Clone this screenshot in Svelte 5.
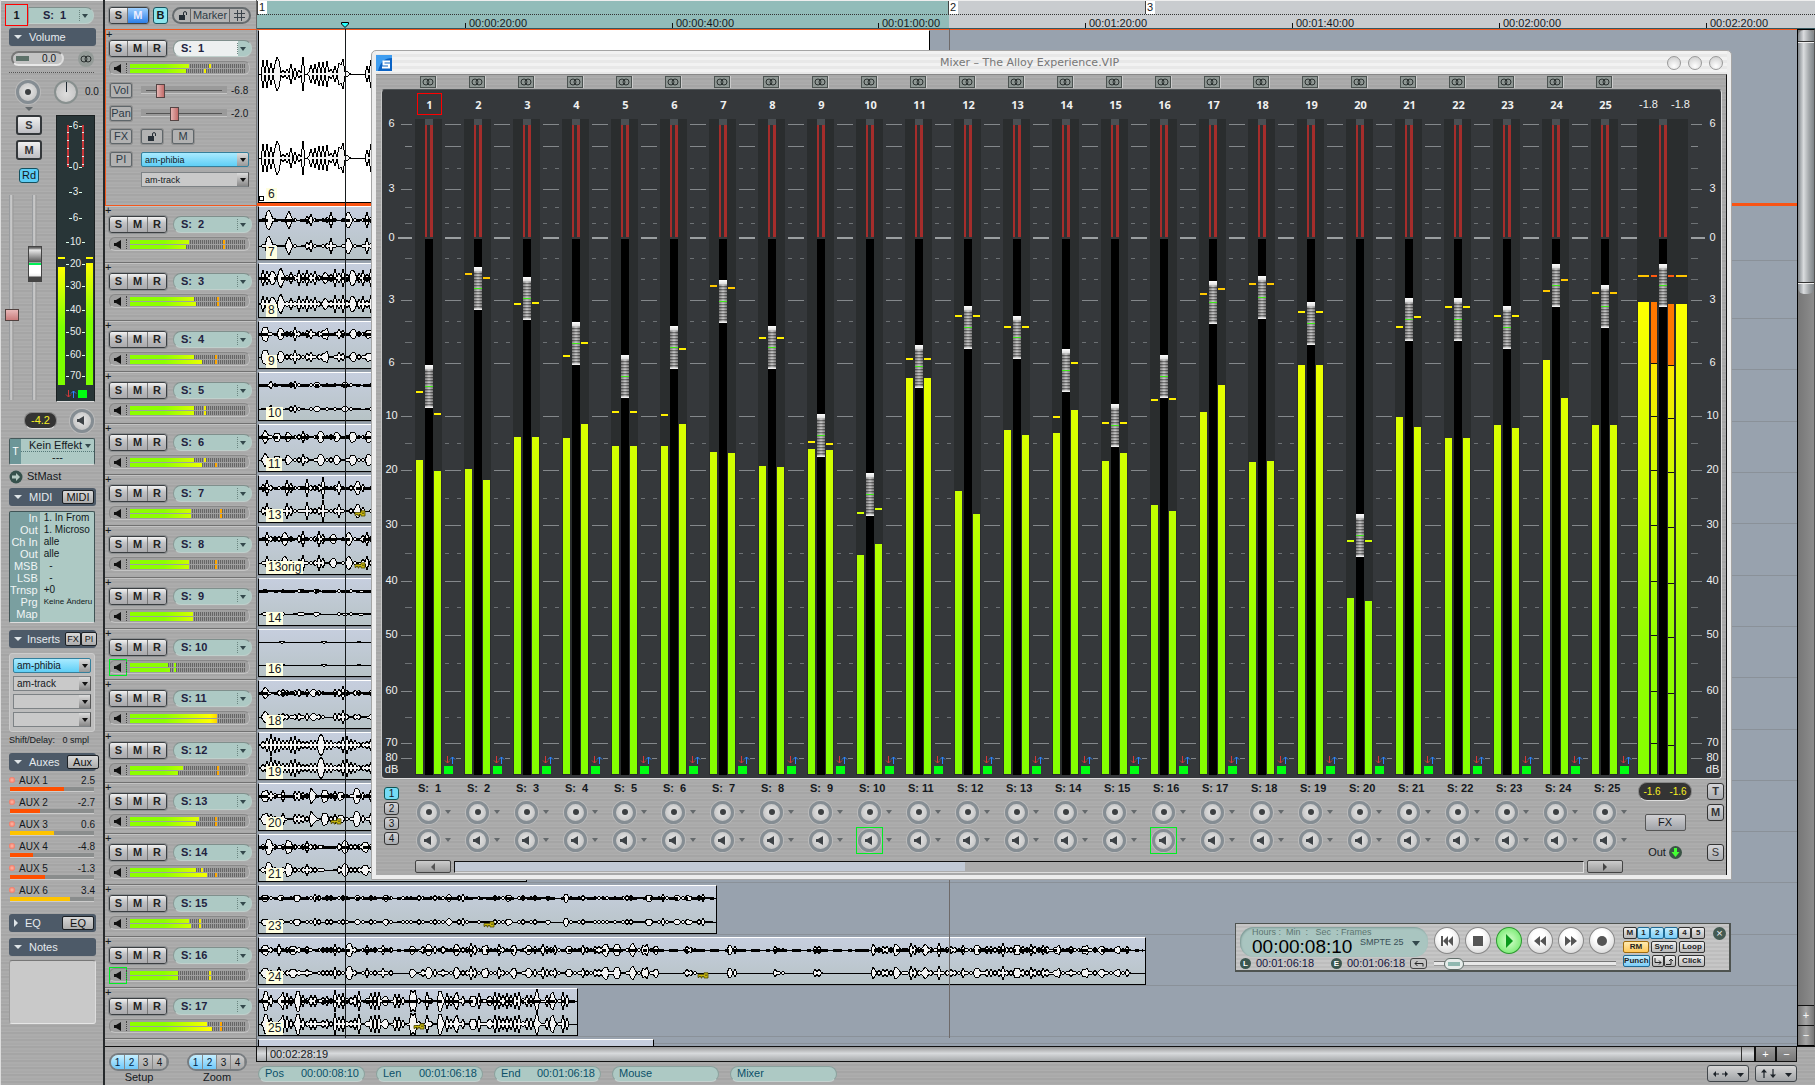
<script>
  const PX_PER_SECOND = 10.34;
  const at = (seconds) => Math.round(seconds * PX_PER_SECOND + 1);

  const ticks = [
    [20, '00:00:20:00'], [40, '00:00:40:00'], [60, '00:01:00:00'], [80, '00:01:20:00'],
    [100, '00:01:40:00'], [120, '00:02:00:00'], [140, '00:02:20:00']
  ];
  const markers = [[0, '1'], [66.8, '2'], [85.9, '3']];

  // Track rows: row height, meter levels and peaks, clip label, clip length and wave shape
  const tracks = [
    { n: 1, h: 177, l: 59, r: 56, pl: 80, pr: 75, clip: '6', w: 672, wave: [20, 34, 12, 0.7], gaps: [[45, 49], [91, 107]] },
    { n: 2, h: 57, l: 59, r: 56, pl: 94, pr: 94, clip: '7', w: 560, wave: [13, 19, 3, 0.08] },
    { n: 3, h: 58, l: 64, r: 66, pl: 88, pr: 88, clip: '8', w: 560, wave: [12, 9, 4, 0.3] },
    { n: 4, h: 51, l: 64, r: 72, pl: 86, pr: 86, clip: '9', w: 560, wave: [9, 12, 4, 0.3] },
    { n: 5, h: 52, l: 64, r: 64, pl: 75, pr: 75, clip: '10', w: 560, wave: [5, 24, 5, 0.35] },
    { n: 6, h: 51, l: 64, r: 72, pl: 75, pr: 86, clip: '11', w: 560, wave: [9, 13, 4, 0.3] },
    { n: 7, h: 51, l: 61, r: 61, pl: 91, pr: 91, clip: '13', w: 560, wave: [12, 17, 3, 0.25], key: 95 },
    { n: 8, h: 52, l: 59, r: 59, pl: 86, pr: 86, clip: '13orig', w: 560, wave: [10, 17, 3, 0.25], key: 95 },
    { n: 9, h: 51, l: 63, r: 63, pl: 0, pr: 0, clip: '14', w: 560, wave: [3, 14, 9, 0.6], gaps: [[26, 32], [62, 78]] },
    { n: 10, h: 51, l: 38, r: 40, pl: 45, pr: 45, clip: '16', w: 560, wave: [3, 46, 1, 0], solo: true },
    { n: 11, h: 52, l: 87, r: 87, pl: 0, pr: 0, clip: '18', w: 560, wave: [8, 14, 4, 0.4], gaps: [[66, 74]] },
    { n: 12, h: 51, l: 53, r: 48, pl: 88, pr: 88, clip: '19', w: 560, wave: [12, 25, 10, 0.2] },
    { n: 13, h: 51, l: 69, r: 66, pl: 86, pr: 86, clip: '20', w: 560, wave: [10, 14, 4, 0.4], key: 71 },
    { n: 14, h: 51, l: 66, r: 77, pl: 72, pr: 86, clip: '21', w: 269, wave: [10, 18, 5, 0.25], gaps: [[66, 74]] },
    { n: 15, h: 52, l: 59, r: 61, pl: 70, pr: 70, clip: '23', w: 459, wave: [5, 14, 4, 0.35], gaps: [[292, 304]], key: 224 },
    { n: 16, h: 51, l: 48, r: 48, pl: 80, pr: 80, clip: '24', w: 888, wave: [8, 13, 5, 0.35], gaps: [[134, 150], [400, 424], [438, 468], [478, 514], [526, 555], [564, 612], [872, 890]], key: 438 },
    { n: 17, h: 51, l: 77, r: 82, pl: 91, pr: 91, clip: '25', w: 320, wave: [15, 14, 3, 0.6], gaps: [[310, 321]], key: 154 }
  ];

  function random(seed) {
    let s = seed * 7919 + 17;
    return () => ((s = (s * 16807) % 2147483647) / 2147483647);
  }

  function wavePath(track, centre) {
    const [amp, period, decay, base] = track.wave;
    const rnd = random(track.n);
    const width = track.w - 3;
    const up = [];
    const down = [];
    let phase = 0;
    let next = period;
    let power = 1;
    for (let x = 2, i = 0; x < width; x += 2, i += 1) {
      phase += 2;
      if (phase > next) {
        phase = 0;
        next = period * (0.7 + rnd() * 0.6);
        power = 0.6 + rnd() * 0.4;
      }
      const silent = (track.gaps ?? []).some(([a, b]) => x >= a && x <= b);
      const distance = Math.abs(phase - next / 2);
      const jitter = Math.pow(rnd(), 1.5);
      const valley = i % 2 === 0 && distance > 1;
      const env = (base * jitter + (1 - base) * power * Math.exp(-distance / decay)) * (valley ? 0.15 : 1);
      const a = silent ? 0 : amp * env;
      up.push(`${x} ${Math.round(centre - a)}`);
      down.unshift(`${x} ${Math.round(centre + a)}`);
    }
    return `M0 ${centre}L${up.join('L')}L${width + 2} ${centre}L${down.join('L')}Z`;
  }

  const laneWaves = tracks.map((t) => {
    const h = t.n === 1 ? 172 : t.h - 4;
    const c = Math.round(h * 0.25);
    return { h, c, top: wavePath(t, c), bottom: wavePath(t, Math.round(h * 0.74)) };
  });

  // Mixer scale, in pixels below the top of the meters
  const scale = [
    [5, '6'], [70, '3'], [119, '0'], [181, '3'], [244, '6'], [297, '10'], [351, '20'],
    [406, '30'], [462, '40'], [516, '50'], [572, '60'], [624, '70'], [639, '80'], [651, 'dB']
  ];
  const fullTicks = [5, 27, 70, 181, 244, 297, 351, 406, 462, 516, 572, 624, 639];
  const halfTicks = [49, 88, 104, 139, 160, 202, 223, 324, 379, 434, 488, 544, 598];
  const METER = 656;
  const THUMB = 43;

  // left level, right level, fader top, left peak, right peak
  const channels = [
    [341, 352, 246, 273, 295], [350, 361, 148, 155, 159], [318, 318, 158, 185, 184],
    [319, 305, 203, 237, 224], [327, 327, 236, 293, 293], [327, 305, 207, 296, 230],
    [333, 334, 161, 167, 169], [347, 348, 207, 219, 219], [330, 331, 295, 323, 325],
    [436, 425, 354, 394, 390], [259, 259, 226, 240, 240], [372, 395, 187, 197, 197],
    [311, 316, 197, 208, 208], [314, 291, 230, 298, 244], [342, 334, 285, 304, 304],
    [386, 392, 236, 281, 280], [293, 266, 162, 175, 170], [343, 342, 157, 165, 165],
    [246, 246, 183, 193, 193], [479, 482, 395, 422, 422], [298, 308, 179, 208, 198],
    [319, 319, 179, 188, 188], [306, 309, 187, 197, 197], [241, 279, 145, 172, 161],
    [306, 306, 166, 174, 174]
  ];
  const peakTone = (y) => (y < 176 ? 'amber' : y > 380 ? 'lime' : 'yellow');
  const trackName = (n) => (n < 10 ? `S:\u00a0\u00a0${n}` : `S:\u00a0${n}`);

  const inspectorScale = [
    [10, '6'], [51, '0'], [76, '3'], [102, '6'], [126, '10'], [148, '20'],
    [170, '30'], [194, '40'], [216, '50'], [239, '60'], [260, '70']
  ];
  const midi = [
    ['In', '1. In From'], ['Out', '1. Microso'], ['Ch In', 'alle'], ['Out', 'alle'], ['MSB', '  -'],
    ['LSB', '  -'], ['Trnsp', '+0'], ['Prg', 'Keine Änderu'], ['Map', '']
  ];
  const auxes = [
    ['AUX 1', '2.5', 54, 'red'], ['AUX 2', '-2.7', 30, 'red'], ['AUX 3', '0.6', 44, 'gold'],
    ['AUX 4', '-4.8', 23, 'red'], ['AUX 5', '-1.3', 35, 'red'], ['AUX 6', '3.4', 60, 'gold']
  ];
  const inserts = ['am-phibia', 'am-track', '', ''];
  const status = [['Pos', '00:00:08:10'], ['Len', '00:01:06:18'], ['End', '00:01:06:18'], ['Mouse', ''], ['Mixer', '']];
</script>

{#snippet speaker()}
  <svg class="speaker" width="8" height="9" viewBox="0 0 8 9" aria-hidden="true"><path d="M0 3H2L7 0V9L2 6H0Z" /></svg>
{/snippet}

{#snippet link()}
  <svg width="12" height="8" viewBox="0 0 12 8" fill="none" stroke="#2c3231" aria-hidden="true"><circle cx="4" cy="4" r="3" /><circle cx="8" cy="4" r="3" /></svg>
{/snippet}

{#snippet lock()}
  <svg width="10" height="9" viewBox="0 0 10 9" aria-hidden="true"><path d="M1 4H7V9H1Z" fill="#262e36" /><path d="M5.500 4V2Q5.500 .6 7 .6T8.500 2V4" fill="none" stroke="#262e36" /></svg>
{/snippet}

{#snippet clip(track, wave)}
  <div class="clip" class:selected={track.n === 1} style:width={`${track.w}px`}>
    <svg width={track.w} height={wave.h} aria-hidden="true">
      <path class="wave" d={wave.top} />
      {#if ![1, 10, 12].includes(track.n)}<path class="core" d={`M0 ${wave.c}H${track.w - 4}`} />{/if}
      <path class="wave" d={wave.bottom} />
    </svg>
    {#if track.n === 1}<span class="grip"></span>{/if}
    <span class="clip-name">{track.clip}</span>
    {#if track.key}
      <svg class="key" style:left={`${track.key}px`} width="12" height="7" viewBox="0 0 12 7" aria-hidden="true">
        <path d="M1 2.500H7V.8H11V6H7V4.500H5V6H4V4.500H2V5.500H1Z" fill="#c8b80c" stroke="#4c4600" stroke-width=".8" /><path d="M9 2.500V4" stroke="#222" />
      </svg>
    {/if}
  </div>
{/snippet}

{#snippet arrows()}
  <svg class="arrows" width="12" height="8" viewBox="0 0 12 8" fill="none" aria-hidden="true">
    <path d="M3.500 0V7M1 4.500L3.500 7L6 4.500" stroke="#d2383a" /><path d="M8.500 8V1M6 3.500L8.500 1L11 3.500" stroke="#2c86ff" />
  </svg>
{/snippet}

{#snippet trackMeter(track)}
  <div class="meter-pill">
    <button class="mute" class:framed={track.solo || track.n === 16} aria-label={`Monitor track ${track.n}`}>{@render speaker()}</button>
    <i class="dots"></i>
    <div class="levels">
      {#each [[track.l, track.pl], [track.r, track.pr]] as [level, peak]}
        <div class="level">
          <div class="fill" style:width={`${level}px`}></div>
          {#if peak}<i class="peak" class:green={peak < 60} class:amber={peak > 84} style:left={`${peak - 1}px`}></i>{/if}
        </div>
      {/each}
    </div>
  </div>
{/snippet}

<div class="app">
  <aside class="inspector metal">
    <div class="current">
      <button class="number">1</button>
      <label class="pill-select"><select aria-label="Track"><option>S:&nbsp;&nbsp;1</option></select></label>
    </div>
    <h2 class="bar"><i class="tri"></i>Volume</h2>
    <div class="gain"><span class="gain-pill"><i></i>0.0</span><button class="link-button" aria-label="Link channels">{@render link()}</button></div>
    <div class="knobs">
      <button class="knob" aria-label="Record input"><i></i></button>
      <button class="pan-knob" aria-label="Pan"><i></i></button>
      <span>0.0</span>
    </div>
    <div class="strip">
      <div class="strip-left">
        <i class="tri grey"></i>
        <button class="square">S</button>
        <button class="square">M</button>
        <button class="read">Rd</button>
        <div class="strip-faders">
          <input class="small-fader" type="range" min="0" max="193" value="79" aria-label="Automation" />
          <input class="main-fader" type="range" min="0" max="172" value="120" aria-label="Volume" />
        </div>
      </div>
      <div class="strip-meter">
        <i class="clip-line"></i><i class="clip-line right"></i>
        <i class="vbar" style:height="118px"></i><i class="vbar right" style:height="122px"></i>
        <i class="vpeak"></i><i class="vpeak right"></i>
        {#each inspectorScale as [y, label]}<span style:top={`${y - 6}px`}><i></i>{label}<i></i></span>{/each}
        <div class="strip-status">{@render arrows()}<i class="led"></i></div>
      </div>
    </div>
    <div class="readout"><span class="lcd">-4.2</span><button class="knob" aria-label="Monitor">{@render speaker()}</button></div>
    <div class="effect"><b>T</b><label><select aria-label="Effect"><option>Kein Effekt</option></select><span>---</span></label></div>
    <div class="output"><svg width="14" height="14" viewBox="0 0 14 14" aria-hidden="true"><circle cx="7" cy="7" r="6.500" fill="#36514c" /><path d="M3 5.500H7V3L11 7L7 11V8.500H3Z" fill="#b6cbc4" /></svg>StMast</div>
    <h2 class="bar"><i class="tri"></i>MIDI<button class="chip wide">MIDI</button></h2>
    <table class="midi"><tbody>{#each midi as [name, value]}<tr><th>{name}</th><td class:tiny={value.length > 10}>{value}</td></tr>{/each}</tbody></table>
    <h2 class="bar"><i class="tri"></i>Inserts<span class="pair"><button class="chip">FX</button><button class="chip">PI</button></span></h2>
    <div class="inserts">
      {#each inserts as name, i}<label class="combo" class:on={i === 0}><select aria-label={`Insert ${i + 1}`}><option>{name}</option></select></label>{/each}
    </div>
    <div class="shift"><span>Shift/Delay:</span><span>0 smpl</span></div>
    <h2 class="bar"><i class="tri"></i>Auxes<button class="chip wide">Aux</button></h2>
    <div class="auxes">
      {#each auxes as [name, value, width, tone]}
        <div class="aux"><div><i class="lamp"></i>{name}<span>{value}</span></div><div class="aux-track"><i class={tone} style:width={`${width}px`}></i></div></div>
      {/each}
    </div>
    <h2 class="bar"><i class="tri side"></i>EQ<button class="chip wide">EQ</button></h2>
    <h2 class="bar notes-bar"><i class="tri"></i>Notes</h2>
    <textarea class="notes" aria-label="Notes"></textarea>
  </aside>

  <div class="arranger">
    <header class="top">
      <div class="tools metal">
        <div class="group"><button>S</button><button class="blue">M</button></div>
        <button class="b-button">B</button>
        <div class="marker-tools"><button aria-label="Lock">{@render lock()}</button><button>Marker</button><button aria-label="Grid"><svg width="11" height="11" viewBox="0 0 11 11" stroke="#3a434a" aria-hidden="true"><path d="M3.500 0V11M7.500 0V11M0 3.500H11M0 7.500H11" /></svg></button></div>
      </div>
      <div class="ruler">
        <div class="loop" style:width={`${at(66.8)}px`}></div>
        <div class="flags">{#each markers as [t, label]}<span style:left={`${at(t) - 1}px`}>{label}</span>{/each}</div>
        <div class="times">{#each ticks as [t, label]}<span style:left={`${at(t)}px`}>{label}</span>{/each}</div>
        <svg class="play-flag" style:left={`${at(8.4) - 4}px`} width="8" height="6" viewBox="0 0 8 6" aria-hidden="true"><path d="M.5 .5H7.500V2L4 5.500L.5 2Z" fill="#2ff" stroke="#000" /></svg>
      </div>
    </header>

    <div class="body">
      <div class="rows">
        {#each tracks as track, i}
          <div class="row" class:active={i === 0} style:height={`${track.h}px`}>
            <div class="head metal">
              <span class="plus">+</span>
              <div class="head-line">
                <div class="group"><button>S</button><button>M</button><button>R</button></div>
                <label class="pill-select" class:white={i === 0}><select aria-label="Track name"><option>{trackName(track.n)}</option></select></label>
              </div>
              {@render trackMeter(track)}
              {#if i === 0}
                <div class="control"><button class="tag">Vol</button><input type="range" min="0" max="100" value="20" aria-label="Track volume" /><span>-6.8</span></div>
                <div class="control"><button class="tag">Pan</button><input type="range" min="0" max="100" value="38" aria-label="Track pan" /><span>-2.0</span></div>
                <div class="control"><button class="tag">FX</button><button class="tag" aria-label="Lock">{@render lock()}</button><button class="tag">M</button></div>
                <div class="control plugins"><button class="tag">PI</button>
                  <div>
                    <label class="combo on"><select aria-label="Plug-in 1"><option>am-phibia</option></select></label>
                    <label class="combo"><select aria-label="Plug-in 2"><option>am-track</option></select></label>
                  </div>
                </div>
              {/if}
            </div>
            <div class="lane">{@render clip(track, laneWaves[i])}</div>
          </div>
        {/each}
        <div class="row last"><div class="head metal"></div><div class="lane"><div class="clip stub"></div></div></div>
        <i class="playhead" style:left={`${152 + at(8.4)}px`}></i>
        <i class="playhead end" style:left={`${152 + at(66.8)}px`}></i>
      </div>
      <div class="v-scroll"><div class="v-thumb"><i></i><i></i></div><button>+</button><button>−</button></div>
    </div>

    <footer class="bottom metal">
      <div class="setups">
        {#each ['Setup', 'Zoom'] as name}
          <div><span class="quad"><button class="on">1</button><button class="on">2</button><button>3</button><button>4</button></span>{name}</div>
        {/each}
      </div>
      <div class="foot">
        <div class="h-scroll"><div class="h-thumb"><i></i><span>00:02:28:19</span><i class="end"></i></div><button>+</button><button>−</button></div>
        <div class="status">
          {#each status as [name, value]}<span class="field">{name}<b>{value}</b></span>{/each}
          <div class="zoomers">
            <button aria-label="Horizontal zoom"><svg width="34" height="10" viewBox="0 0 34 10" fill="#1c2228" aria-hidden="true"><path d="M2 5L5 2V4.500H8V5.500H5V8ZM17 5L14 2V4.500H11V5.500H14V8ZM26 4H33L29.500 8Z" /></svg></button>
            <button aria-label="Vertical zoom"><svg width="34" height="10" viewBox="0 0 34 10" fill="#1c2228" aria-hidden="true"><path d="M5 0L8 3.500H5.600V9H4.400V3.500H2ZM14 9L11 5.500H13.400V0H14.600V5.500H17ZM26 4H33L29.500 8Z" /></svg></button>
          </div>
        </div>
      </div>
    </footer>
  </div>

  <section class="mixer" aria-label="Mixer">
    <div class="title">
      <svg width="16" height="16" viewBox="0 0 16 16" aria-hidden="true"><rect width="16" height="16" fill="#0a62c4" /><path d="M0 0H16V3Q5 3 2 16H0Z" fill="#3f9df0" /><path d="M14 6.500H7.500V9.500H13V12.500H6" fill="none" stroke="#fff" stroke-width="2" /></svg>
      <h1>Mixer – The Alloy Experience.VIP</h1>
      <div class="window-buttons"><button aria-label="Minimise"></button><button aria-label="Maximise"></button><button aria-label="Close"></button></div>
    </div>
    <div class="mixer-body metal">
      <div class="links">{#each channels as _, i}<div class="cell"><button aria-label={`Link channel ${i + 1}`}>{@render link()}</button></div>{/each}</div>
      <div class="panel">
        <div class="scale">{#each scale as [y, label]}<span style:top={`${y - 7}px`}>{label}</span>{/each}
          <svg width="33" height="656" aria-hidden="true">{#each fullTicks as y}<path class="tick" d={y === 27 ? `M23 ${y}.5H30` : `M19 ${y}.5H30`} />{/each}{#each halfTicks as y}<path class="tick dim" d={`M23 ${y}.5H30`} />{/each}<path class="tick zero" d="M16 119H30" /></svg>
        </div>
        {#each channels as [l, r, fader, pl, pr], i}
          <div class="channel" class:final={i === 24}>
            <div class="number-row"><span class:picked={i === 0}>{i + 1}</span></div>
            <div class="meter">
              <div class="columns">
                <i class="bar-level" style:height={`${METER - 1 - l}px`}></i>
                <input class="fader" type="range" min="0" max={METER - THUMB} value={METER - THUMB - fader} aria-label={`Fader ${i + 1}`} />
                <i class="bar-level" style:height={`${METER - 1 - r}px`}></i>
                <i class={`mark ${peakTone(pl)}`} style:top={`${pl - 1}px`}></i>
                <i class={`mark right ${peakTone(pr)}`} style:top={`${pr - 1}px`}></i>
              </div>
              <div class="gap">
                <svg width="19" height="656" aria-hidden="true">{#each fullTicks as y}<path class="tick" d={`M3 ${y}.5H19`} />{/each}{#each halfTicks as y}<path class="tick dim" d={`M3 ${y}.5H7M15 ${y}.5H19`} />{/each}<path class="tick zero" d="M3 119H19" /></svg>
                {@render arrows()}<i class="led"></i>
              </div>
            </div>
          </div>
        {/each}
        <div class="master">
          <div class="number-row"><span>-1.8</span><span>-1.8</span></div>
          <div class="meter">
            <i class="wide-bar" style:height="472px"></i><i class="hot-bar" style:height="472px"></i>
            <input class="fader" type="range" min="0" max={METER - THUMB} value={METER - THUMB - 145} aria-label="Master fader" />
            <i class="hot-bar" style:height="470px"></i><i class="wide-bar" style:height="470px"></i>
            <i class="master-peak"></i>
          </div>
        </div>
        <div class="scale right">{#each scale as [y, label]}<span style:top={`${y - 7}px`}>{label}</span>{/each}
          <svg width="33" height="656" aria-hidden="true">{#each fullTicks as y}<path class="tick" d={y === 27 ? `M3 ${y}.5H10` : `M3 ${y}.5H14`} />{/each}{#each halfTicks as y}<path class="tick dim" d={`M3 ${y}.5H10`} />{/each}<path class="tick zero" d="M3 119H17" /></svg>
        </div>
      </div>
      <div class="desk">
        <div class="pages"><button class="on">1</button><button>2</button><button>3</button><button>4</button></div>
        <div class="desk-main">
          <div class="desk-channels">
            {#each channels as _, i}
              <div class="desk-channel" class:final={i === 24}>
                <b>{trackName(i + 1)}</b>
                <div><button class="knob" aria-label={`Record ${i + 1}`}><i></i></button><i class="tri grey"></i></div>
                <div><span class:framed={i === 9 || i === 15}><button class="knob" aria-label={`Solo ${i + 1}`}>{@render speaker()}</button></span><i class="tri grey"></i></div>
              </div>
            {/each}
          </div>
          <div class="mixer-scroll"><button aria-label="Scroll left"><i class="tri left"></i></button><div class="trough"><i></i></div><button aria-label="Scroll right"><i class="tri side"></i></button></div>
        </div>
        <div class="master-desk"><span class="lcd"><b>-1.6</b><b>-1.6</b></span><button class="fx">FX</button><div class="out">Out<svg width="13" height="13" viewBox="0 0 13 13" aria-hidden="true"><circle cx="6.500" cy="6.500" r="6.500" fill="#3a5345" /><path d="M5 2H8V6H10.500L6.500 11L2.500 6H5Z" fill="#4f3" /></svg></div></div>
        <div class="side-buttons"><button class="mini">T</button><button class="mini">M</button><button class="mini plain">S</button></div>
      </div>
    </div>
  </section>

  <section class="transport" aria-label="Transport">
    <div class="clock">
      <div class="display">
        <div><small>Hours :&nbsp; Min &nbsp;: &nbsp; Sec &nbsp;: Frames</small><strong>00:00:08:10</strong></div>
        <label><select aria-label="Time format"><option>SMPTE 25</option></select></label>
      </div>
      <div class="positions"><b class="dot">L</b><span>00:01:06:18</span><b class="dot">E</b><span>00:01:06:18</span><button aria-label="Return"><svg width="10" height="7" viewBox="0 0 10 7" fill="none" stroke="#222" aria-hidden="true"><path d="M9 6.500V3.500H1M3.500 1L1 3.500L3.500 6" /></svg></button></div>
    </div>
    <div class="drive">
      <div class="rounds">
        <button aria-label="To start"><svg width="14" height="12" viewBox="0 0 14 12"><path d="M1 1H3V11H1ZM8 1V11L3 6ZM13 1V11L8 6Z" /></svg></button>
        <button aria-label="Stop"><svg width="14" height="12" viewBox="0 0 14 12"><path d="M2 1H12V11H2Z" /></svg></button>
        <button class="play" aria-label="Play"><svg width="14" height="14" viewBox="0 0 14 14"><path d="M4 0L11 7L4 14Z" /></svg></button>
        <button aria-label="Rewind"><svg width="14" height="12" viewBox="0 0 14 12"><path d="M7 1V11L1 6ZM13 1V11L7 6Z" /></svg></button>
        <button aria-label="Forward"><svg width="14" height="12" viewBox="0 0 14 12"><path d="M1 1V11L7 6ZM7 1V11L13 6Z" /></svg></button>
        <button aria-label="Record"><svg width="14" height="12" viewBox="0 0 14 12"><circle cx="7" cy="6" r="5" /></svg></button>
      </div>
      <input class="jog" type="range" min="0" max="100" value="6" aria-label="Jog" />
    </div>
    <div class="modes">
      <div class="six"><button>M</button><button class="on">1</button><button class="on">2</button><button class="on">3</button><button>4</button><button>5</button></div>
      <div><button class="gold">RM</button><button>Sync</button><button>Loop</button></div>
      <div><button class="on">Punch</button><span><button aria-label="Punch in"><svg width="8" height="7" viewBox="0 0 8 7" fill="none" stroke="#222"><path d="M1 0V4.500H7M5 2.500L7 4.500L5 6.500" /></svg></button><button aria-label="Punch out"><svg width="8" height="7" viewBox="0 0 8 7" fill="none" stroke="#222"><path d="M0 6.500H5V1M3 3L5 1L7 3" /></svg></button></span><button>Click</button></div>
    </div>
    <button class="close" aria-label="Close">×</button>
  </section>
</div>

<style>
  :global(body) { margin: 0; background: #a8a8a8; }
  :global(*) { box-sizing: border-box; }
  .app { position: relative; display: flex; min-height: 100vh; overflow: hidden; font: 11px/13px "Liberation Sans", Arial, sans-serif; color: #14181c; }
  button, select, input, textarea { font: inherit; color: inherit; margin: 0; padding: 0; border: 0; background: none; }
  select { appearance: none; outline: 0; }
  button { display: inline-flex; align-items: center; justify-content: center; }
  svg { display: block; flex: none; }
  .metal { background: repeating-linear-gradient(180deg, #a9a9a9 0 2px, #aeaeae 2px 3px, #a5a5a5 3px 5px, #acacac 5px 7px); }

  .tri { flex: none; width: 0; height: 0; border: 4px solid transparent; border-top: 4px solid #dfe5e8; border-bottom: 0; }
  .tri.side { border: 4px solid transparent; border-left-color: #dfe5e8; border-right: 0; }
  .tri.left { border: 4px solid transparent; border-right-color: #555; border-left: 0; }
  .tri.grey { border-top-color: #63686b; }
  .led { display: block; width: 9px; height: 8px; background: #0f1; }

  /* Inspector */
  .inspector { display: flex; flex-direction: column; flex: none; width: 105px; padding: 4px 9px 0 8px; border-right: 2px solid #26292b; border-left: 1px solid #ddd; box-shadow: inset 0 1px #eee; }
  .current { display: flex; align-items: center; height: 22px; margin-left: -4px; width: 90px; }
  .current .number { width: 23px; height: 22px; border: 1px solid #f00; background: #a9c6c1; font-weight: bold; }
  .current .pill-select { width: 66px; border-radius: 0 8px 8px 0; padding-left: 14px; }
  .pill-select { position: relative; display: flex; width: 79px; height: 17px; padding-left: 7px; border: 1px solid #8ba19d; border-color: #7f8f8c #b8cbc7 #c0d0cc #8a9a97; border-radius: 8px; background: #adc9c4; }
  .pill-select select { width: 100%; font-weight: bold; color: #222240; }
  .pill-select::after, .combo::after, .effect label::after, .display label::after { content: ""; position: absolute; right: 5px; top: 6px; border: 3px solid transparent; border-top: 4px solid #33484c; border-bottom: 0; }
  .pill-select::before { content: ""; position: absolute; right: 13px; top: 2px; bottom: 2px; border-left: 1px dotted #6b8580; }
  .pill-select.white { background: linear-gradient(90deg, #edf0f0 64px, #adc9c4 64px); }
  .bar { display: flex; align-items: center; flex: none; gap: 7px; width: 87px; height: 18px; margin: 0; padding: 0 2px 0 5px; border-radius: 3px; background: #4d5a68; color: #e6eaee; font: 11px/13px "Liberation Sans", Arial, sans-serif; }
  .current + .bar { margin-top: 2px; }
  .chip { flex: none; height: 14px; width: 16px; border: 1px solid #1c2024; border-radius: 2px; background: linear-gradient(#d8d8d8, #adadad); color: #111; font-size: 10px; }
  .chip.wide { width: 32px; margin-left: auto; font-size: 11px; }
  .pair { display: flex; margin-left: auto; }
  .pair .chip { font-size: 9px; }
  .bar:has(.pair) { gap: 5px; }
  .gain { display: flex; align-items: center; justify-content: space-between; flex: none; height: 27px; padding: 0 0 1px 2px; border-bottom: 1px dotted #555; width: 85px; }
  .gain-pill { display: flex; align-items: center; justify-content: space-between; width: 53px; height: 15px; padding: 0 6px 0 3px; border: 2px solid #888; border-color: #777 #ddd #e8e8e8 #777; border-radius: 8px; background: #c3c3c3; font-size: 10px; }
  .gain-pill i { width: 13px; height: 5px; background: #5d7169; }
  .link-button { width: 16px; height: 16px; border-radius: 50%; background: #949b98; }
  .knobs { display: flex; align-items: center; flex: none; gap: 14px; height: 32px; padding: 5px 0 0 7px; }
  .knobs span { margin-left: -7px; font-size: 10px; }
  .knob { flex: none; width: 24px; height: 24px; border: 3px solid #858d93; border-radius: 50%; background: radial-gradient(circle at 50% 45%, #e8e8e8, #b9b9b9); box-shadow: 0 0 0 1px #bcbcbc; }
  .knob > i { width: 6px; height: 6px; border-radius: 50%; background: #3c3f41; }
  .pan-knob { flex: none; width: 24px; height: 24px; border: 2px solid #88908f; border-radius: 50%; background: radial-gradient(circle at 50% 60%, #ddd, #bbb); align-items: flex-start; }
  .pan-knob i { width: 1px; height: 10px; background: #1d2730; }
  .strip { display: flex; justify-content: space-between; flex: none; width: 86px; height: 298px; padding-top: 10px; }
  .strip-left { display: flex; flex-direction: column; align-items: center; width: 40px; margin-top: -9px; }
  .strip-left > .tri { margin: 1px 0 4px; }
  .square { width: 26px; height: 20px; margin-bottom: 5px; border: 2px solid #33373a; border-radius: 3px; background: linear-gradient(#f0f0f0, #bdbdc2); font-weight: bold; color: #333; }
  .read { width: 20px; height: 15px; margin-top: 3px; border: 1px solid #14505f; border-radius: 3px; background: #5ccdf5; }
  .strip-faders { display: flex; gap: 8px; margin: 12px 0 0 -12px; height: 205px; }
  .strip-faders input, .fader { appearance: none; writing-mode: vertical-lr; direction: rtl; }
  .strip-faders input { width: 15px; height: 205px; background: linear-gradient(90deg, transparent 5px, #84888c 5px, #d6d6d6 7px, #999 9px, transparent 10px); }
  .strip-faders input::-webkit-slider-thumb { appearance: none; width: 14px; height: 12px; border: 1px solid #51413f; background: linear-gradient(#e8b7b7, #c97c7c); }
  .strip-faders .main-fader::-webkit-slider-thumb { width: 14px; height: 36px; border: 1px solid #444; background: linear-gradient(#666 0 1px, #e8e8e8 3px, #555 15px, #eee 16px, #0e5 16px 18px, #fff 18px 26px, #eee 29px, #444 30px); }
  .strip-meter { position: relative; width: 39px; height: 287px; border: 1px solid #1a2021; border-bottom-color: #ddd; background: #283537; color: #e8eeee; font-size: 11px; text-align: center; }
  .strip-meter span { position: absolute; left: 9px; right: 9px; display: flex; align-items: center; justify-content: center; gap: 1px; font-size: 10px; line-height: 12px; }
  .strip-meter span i { width: 3px; height: 1px; background: #dfe; }
  .vbar, .vpeak, .clip-line { position: absolute; left: 1px; width: 7px; bottom: 16px; background: linear-gradient(#ff0, #7cff00 60px); }
  .vpeak { bottom: auto; top: 141px; height: 2px; background: #ff0; }
  .clip-line { top: 9px; bottom: auto; left: 10px; width: 2px; height: 42px; background: repeating-linear-gradient(#c8383a 0 7px, #eee 7px 8px); }
  .vbar.right, .vpeak.right { left: auto; right: 1px; }
  .clip-line.right { left: auto; right: 10px; }
  .strip-status { position: absolute; bottom: 3px; left: 8px; display: flex; align-items: center; gap: 1px; }
  .readout { display: flex; align-items: center; gap: 14px; flex: none; height: 35px; padding-left: 15px; }
  .lcd { display: flex; align-items: center; justify-content: center; width: 38px; height: 17px; border: 1px solid #888; border-bottom-color: #ddd; border-radius: 8px; background: #343434; color: #f7ef22; font-size: 11px; }
  .readout .knob { margin-left: -1px; }
  .effect { display: flex; flex: none; width: 86px; height: 27px; border: 1px solid #44585a; border-bottom-color: #ddd; border-radius: 2px; background: #adc9c4; }
  .effect b { display: flex; align-items: center; justify-content: center; width: 11px; background: #6c9698; color: #fff; font-weight: normal; font-size: 10px; }
  .effect label { position: relative; display: flex; flex-direction: column; flex: 1; text-align: center; }
  .effect select { height: 13px; padding-left: 8px; border-bottom: 1px dotted #577; }
  .effect label span { line-height: 11px; }
  .effect label::after { right: 3px; top: 5px; }
  .output { display: flex; align-items: center; gap: 4px; flex: none; height: 23px; }
  .midi { flex: none; display: block; width: 86px; height: 112px; margin: 5px 0 7px; padding: 0; border: 1px solid #3f5355; border-bottom-color: #ddd; border-radius: 2px; border-spacing: 0; background: linear-gradient(90deg, #7a9fa0 30px, #adc9c4 30px); overflow: hidden; }
  .midi th, .midi td { height: 12px; padding: 0 3px 0 0; font-weight: normal; line-height: 12px; text-align: right; white-space: pre; }
  .midi th { width: 30px; min-width: 30px; color: #f0f5f5; }
  .midi td { padding-left: 3px; text-align: left; color: #10181a; font-size: 10px; }
  .midi td.tiny { font-size: 8px; }
  .inserts { display: flex; flex-direction: column; gap: 3px; flex: none; width: 86px; margin: 5px 0 2px; padding: 4px 3px; border: 1px solid #ccc; border-radius: 3px; background: #bdbdbd; }
  .combo { position: relative; display: flex; height: 15px; border: 1px solid #7d8285; border-right-color: #555; background: linear-gradient(#c9c9c9, #c9c9c9) left / calc(100% - 11px) no-repeat, linear-gradient(#ddd, #888); }
  .combo select { width: 100%; padding-left: 3px; font-size: 10px; line-height: 12px; }
  .combo.on { border-color: #357f9b; border-radius: 2px; background: linear-gradient(#a9eaff, #5fcff6) left / calc(100% - 11px) no-repeat, linear-gradient(#ddd, #999); }
  .combo::after { right: 2px; top: 5px; border-top-color: #111; }
  .shift { display: flex; justify-content: space-between; flex: none; width: 80px; padding: 0 0 6px; font-size: 9px; }
  .auxes { flex: none; display: flex; flex-direction: column; margin: 2px 0 9px; }
  .aux { height: 22px; width: 86px; }
  .aux > div:first-child { display: flex; align-items: center; gap: 4px; height: 14px; font-size: 10px; }
  .aux span { margin-left: auto; }
  .lamp { width: 6px; height: 6px; border-radius: 50%; background: radial-gradient(#ffb9a8, #f0604a); }
  .aux-track { width: 84px; height: 5px; margin-left: 1px; border-bottom: 1px solid #ccc; background: #8a8d8d; }
  .aux-track i { display: block; height: 4px; background: #ff4f00; }
  .aux-track i.gold { background: #ffc400; }
  .notes-bar { margin: 6px 0 4px; }
  .notes { width: 87px; height: 64px; resize: none; border: 1px solid #7f7f7f; border-color: #777 #ddd #e6e6e6 #999; border-radius: 3px; background: #c9c9c9; }

  /* Arranger */
  .arranger { display: flex; flex-direction: column; flex: 1; min-width: 0; }
  .top { display: flex; flex: none; height: 29px; }
  .tools { display: flex; align-items: center; gap: 4px; flex: none; width: 152px; padding: 1px 5px 0 4px; border-right: 1px solid #666; box-shadow: inset 0 1px #eee; }
  .group { display: flex; height: 17px; border: 1px solid #3a3e41; border-radius: 3px; overflow: hidden; box-shadow: 0 0 0 1px #8d9092; }
  .group button { width: 18px; border-right: 1px solid #777; background: linear-gradient(#f2f2f2, #c2c2c4 40%, #a9a9ac); color: #222; font-weight: bold; }
  .group button:nth-child(2) { width: 20px; }
  .group button:last-child { border-right: 0; }
  .group .blue { background: linear-gradient(#9fd0ff, #2c7fe8); color: #eef; }
  .b-button { width: 15px; height: 17px; border: 1px solid #17525c; border-radius: 3px; background: #8be5ee; font-weight: bold; }
  .marker-tools { display: flex; height: 17px; margin-left: auto; border: 2px solid #666b6e; border-radius: 9px; overflow: hidden; background: #b3b3b3; }
  .marker-tools button { padding: 0 2px; border-right: 1px solid #666; color: #2e3b46; }
  .marker-tools button:first-child { padding-left: 4px; }
  .marker-tools button:last-child { border: 0; padding: 0 4px; }
  .ruler { position: relative; flex: 1; overflow: hidden; background: #c9cccf; border-top: 1px solid #eee; border-bottom: 1px solid #35575f; }
  .loop { position: absolute; inset: 0 auto 0 0; background: #92bcb9; }
  .flags { position: relative; height: 14px; border-bottom: 1px dotted #333; }
  .flags span { position: absolute; top: 0; width: 10px; padding-left: 1px; border-left: 1px solid #444; background: #fff; font-size: 11px; }
  .times { position: relative; height: 14px; }
  .times span { position: absolute; top: 1px; padding-left: 4px; line-height: 14px; }
  .times span::before { content: ""; position: absolute; left: 0; bottom: 0; width: 1px; height: 7px; background: #111; }
  .play-flag { position: absolute; bottom: 0; }
  .body { display: flex; flex: 1; min-height: 0; }
  .rows { position: relative; display: flex; flex-direction: column; flex: 1; min-width: 0; overflow: hidden; background: #98a2ae; }
  .row { display: flex; flex: none; }
  .head { position: relative; display: flex; flex-direction: column; flex: none; width: 152px; padding: 10px 4px 0; border-right: 1px solid #5b5f62; border-bottom: 1px solid #717171; box-shadow: inset 0 1px #c3c3c3; }
  .plus { position: absolute; left: 0; top: -2px; font-size: 11px; }
  .active .head { padding-left: 3px; border: 1px solid #f4571c; border-right-color: #777; box-shadow: none; }
  .head-line { display: flex; gap: 6px; height: 17px; margin-bottom: 4px; }
  .meter-pill { display: flex; align-items: center; flex: none; width: 141px; height: 14px; padding: 0 4px 0 0; border: 1px solid #888; border-color: #888 #bbb #c4c4c4 #888; border-radius: 6px; background: #a0a0a0; }
  .mute { width: 16px; height: 15px; }
  .mute .speaker { fill: #111; }
  .framed { outline: 1px solid #0e2; }
  .dots { width: 1px; height: 10px; margin-right: 3px; border-left: 1px dotted #444; }
  .levels { display: flex; flex-direction: column; gap: 1px; flex: 1; }
  .level { position: relative; height: 4px; background: repeating-linear-gradient(90deg, #666 0 1px, #999 1px 2px); }
  .fill { height: 4px; background: linear-gradient(90deg, #8cff00 0 34px, #ff0 80px, #ffb400 92px) no-repeat left / 116px 100%; }
  .peak { position: absolute; top: 0; width: 2px; height: 4px; background: #f3f000; }
  .peak.amber { background: #ffa800; }
  .peak.green { background: #9f0; }
  .control { display: flex; align-items: center; gap: 9px; flex: none; height: 23px; padding-left: 1px; font-size: 10px; }
  .meter-pill + .control { margin-top: 4px; }
  .tag { width: 22px; height: 15px; border: 1px solid #5f666a; border-radius: 2px; background: #b2b2b2; box-shadow: 0 0 0 1px #909090; color: #2d3a46; font-size: 11px; }
  .control input { appearance: none; width: 86px; height: 13px; background: linear-gradient(#555, #555) center / 76px 1px no-repeat, linear-gradient(transparent 2px, #9a9a9a 2px 9px, #c6c6c6 9px 10px, transparent 10px); }
  .control input::-webkit-slider-thumb { appearance: none; width: 9px; height: 14px; border: 1px solid #544; background: linear-gradient(90deg, #e6b4b2, #c26b69); }
  .control input + span { margin-left: -5px; }
  .plugins { align-items: flex-start; padding-top: 4px; }
  .plugins > div { display: flex; flex-direction: column; gap: 5px; }
  .plugins .combo { width: 108px; font-size: 10px; }
  .plugins .combo select { font-size: 9px; }
  .lane { flex: 1; min-width: 0; overflow: hidden; background: linear-gradient(#8a9199, #8a9199) 0 calc(100% - 2px) / 100% 1px no-repeat, #98a2ae; }
  .active .lane { border-top: 1px solid #f4571c; border-bottom: 3px solid #f95414; background: #98a2ae; }
  .clip { position: relative; height: calc(100% - 3px); margin-left: 1px; border: 1px solid #000; border-top-color: #fff; background: linear-gradient(#c6cede, #b7c3c6); overflow: hidden; }
  .clip.selected { height: 100%; background: #fff; }
  .wave { fill: #f4f4f4; stroke: #000; stroke-width: 1; shape-rendering: crispEdges; }
  .core { fill: none; stroke: #000; stroke-width: 3; stroke-dasharray: 9 6 4 3 14 5; shape-rendering: crispEdges; }
  .clip-name { position: absolute; left: 7px; bottom: 0; padding: 0 2px; background: #ffffe0; font-size: 12px; line-height: 13px; }
  .selected .clip-name { bottom: 1px; }
  .grip { position: absolute; left: 0; bottom: 1px; width: 5px; height: 5px; border: 1px solid #000; background: #fff; }
  .key { position: absolute; bottom: 5px; }
  .last { flex: 1 0 7px; overflow: hidden; }
  .stub { width: 396px; height: 12px; background: #c6cede; }
  .playhead { position: absolute; top: 0; bottom: 8px; width: 1px; background: #161a1c; }
  .playhead.end { background: #6e6a6a; }
  .v-scroll { display: flex; flex-direction: column; flex: none; width: 18px; border: 1px solid #000; border-right-color: #555; background: linear-gradient(90deg, #777, #8d8d8d); }
  .v-thumb { display: flex; flex-direction: column; justify-content: space-between; height: 264px; margin-bottom: auto; padding: 11px 0; border-radius: 6px; background: linear-gradient(90deg, #7f858a, #dadcde 35%, #a2a6a9 70%, #7f8589); }
  .v-thumb i { height: 1px; background: #333; box-shadow: 0 1px #eee; }
  .v-scroll button { height: 20px; border-top: 1px solid #111; background: linear-gradient(90deg, #777, #a5a5a5, #777); color: #f4f4f4; }

  .bottom { display: flex; flex: none; height: 39px; border-top: 1px solid #111; }
  .setups { display: flex; justify-content: space-between; width: 151px; padding: 6px 9px 0 4px; }
  .setups > div { display: flex; flex-direction: column; align-items: center; }
  .quad { display: flex; height: 18px; border: 2px solid #777c80; border-radius: 9px; overflow: hidden; }
  .quad button { width: 14px; border-right: 1px solid #888; background: linear-gradient(#ccc, #a8a8a8); font-size: 10px; }
  .quad .on { background: linear-gradient(#c5efff, #6fc8fa); color: #024; }
  .foot { flex: 1; min-width: 0; }
  .h-scroll { display: flex; height: 15px; margin-right: 18px; border: 1px solid #111; border-top: 0; background: #888; }
  .h-thumb { display: flex; align-items: center; flex: 1; gap: 3px; background: linear-gradient(#999, #d8dadc 45%, #a6a9ab); font-size: 11px; }
  .h-thumb i { width: 10px; height: 100%; border-radius: 6px 0 0 6px; border-right: 1px solid #333; }
  .h-thumb .end { margin: 0 3px 0 auto; border-right: 0; border-left: 1px solid #333; border-radius: 0 6px 6px 0; }
  .h-scroll button { width: 21px; border-left: 2px solid #111; background: linear-gradient(#999, #777); color: #fff; }
  .status { display: flex; align-items: center; gap: 11px; height: 23px; padding-left: 2px; }
  .field { display: flex; justify-content: space-between; align-items: center; width: 107px; height: 16px; padding: 0 5px 0 6px; border: 1px solid #8ba19d; border-bottom-color: #c6d2d0; border-radius: 8px; background: #adc9c4; color: #0b5068; }
  .field b { font-weight: normal; }
  .zoomers { display: flex; gap: 6px; margin-left: auto; padding-right: 18px; }
  .zoomers button { width: 42px; height: 17px; border: 1px solid #41464a; border-radius: 3px; background: linear-gradient(#d6d6d6, #a0a3a6); }

  /* Mixer window */
  .mixer { position: absolute; left: 371px; top: 50px; width: 1361px; border: 1px solid #a5a5a5; border-radius: 5px 5px 0 0; background: #ededed; padding: 0 4px 4px; }
  .title { display: flex; align-items: center; height: 23px; background: repeating-linear-gradient(#f2f2f2 0 3px, #e8e8e8 3px 6px); }
  h1 { flex: 1; margin: 0; color: #777; font: 11px/16px "DejaVu Sans", "Noto Sans", sans-serif; text-align: center; }
  .window-buttons { display: flex; gap: 7px; padding-right: 4px; }
  .window-buttons button { width: 14px; height: 14px; border: 1px solid #999; border-radius: 50%; background: radial-gradient(circle at 50% 75%, #fff, #c9c9c9); }
  .mixer-body { border-right: 1px solid #111; border-top: 1px solid #888; }
  .links { display: flex; height: 14px; padding: 1px 0 0 44px; }
  .cell { width: 49px; flex: none; }
  .links button { width: 16px; height: 12px; border: 1px solid #4b5250; background: #8e9693; box-shadow: 1px 0 #ccc; }
  .panel { display: flex; height: 690px; width: 1341px; margin-left: 5px; border: 1px solid #444; border-color: #4f5456 #ddd #ddd #c8c8c8; border-radius: 4px; background: #35383b; color: #f0f0f0; }
  .scale { position: relative; flex: none; width: 33px; height: 656px; margin-top: 29px; }
  .scale span { position: absolute; left: 1px; width: 17px; text-align: center; line-height: 13px; }
  .scale.right span { left: 16px; }
  .tick { stroke: #84888b; stroke-width: 1; }
  .tick.dim { stroke: #6d7174; }
  .tick.zero { stroke: #9b9fa1; stroke-width: 2; }
  .channel { flex: none; width: 49px; }
  .channel.final { width: 46px; }
  .number-row { display: flex; align-items: center; width: 29px; height: 29px; font: bold 11px/13px "Open Sans", "Noto Sans", sans-serif; }
  .number-row span { display: flex; align-items: center; justify-content: center; width: 25px; height: 22px; margin-left: 2px; margin-bottom: 1px; }
  .number-row .picked { border: 1px solid #f00; }
  .meter { display: flex; height: 656px; }
  .columns { position: relative; display: flex; justify-content: space-between; align-items: flex-end; flex: none; width: 27px; padding: 0 1px; background: #2a2d2e; }
  .bar-level { width: 7px; margin-bottom: 1px; background: linear-gradient(#ff0 0 1px, #c6ff00 200px, #94ff00 340px, #84ff00) bottom / 100% 474px no-repeat; }
  .fader { flex: none; width: 8px; height: 656px; margin: 0; background: linear-gradient(#4a4f53 0 6px, transparent 6px), linear-gradient(90deg, transparent 2px, #2c3032 2px 5px, transparent 5px) top / 100% 118px no-repeat, linear-gradient(#a52d2b 0 118px, #34383a 118px 120px, #000 120px); }
  .fader::-webkit-slider-thumb { appearance: none; width: 8px; height: 43px; border-radius: 0; background: linear-gradient(transparent 21px, #3dea14 21px 22px, transparent 22px), linear-gradient(#fff 0, #ddd 4px, transparent 5px 41px, #eee 42px), linear-gradient(90deg, #3336, #fff3 50%, #3336), repeating-linear-gradient(#555 0 1px, #999 1px 2px, #bbb 2px 3px); }
  .mark { position: absolute; left: 1px; width: 7px; height: 2px; background: #fff000; }
  .mark.right { left: auto; right: 1px; }
  .mark.amber { background: #ffc800; }
  .mark.lime { background: #d2ff00; }
  .gap { position: relative; width: 19px; flex: none; }
  .gap .arrows { position: absolute; left: 2px; bottom: 11px; background: #35383b; }
  .gap .led { position: absolute; left: 2px; bottom: 1px; }
  .master { flex: none; width: 51px; }
  .master .number-row { justify-content: space-between; width: 53px; font-weight: normal; font-family: "Liberation Sans", Arial, sans-serif; }
  .master .number-row span { width: auto; margin-left: 2px; }
  .master .meter { position: relative; align-items: flex-end; justify-content: space-between; padding: 0 1px; background: #2a2d2e; }
  .wide-bar { width: 11px; margin-bottom: 1px; background: linear-gradient(#ff0, #c6ff00 200px, #94ff00 340px, #84ff00); }
  .hot-bar { width: 6px; margin-bottom: 1px; background: linear-gradient(transparent 61px, #111 61px 62px, transparent 62px 114px, #111 114px 115px, transparent 115px 168px, #111 168px 169px, transparent 169px 223px, #111 223px 224px, transparent 224px 279px, #111 279px 280px, transparent 280px 333px, #111 333px 334px, transparent 334px 389px, #111 389px 390px, transparent 390px 441px, #111 441px 442px, transparent 442px), linear-gradient(#ff7800 0 61px, #ffe600 62px, #c6ff00 200px, #94ff00 340px, #84ff00); }
  .master .fader { width: 8px; }
  .master-peak { position: absolute; left: 1px; right: 1px; top: 156px; height: 2px; background: linear-gradient(90deg, #ffc400 11px, transparent 11px 13px, #ff5a10 13px 19px, transparent 19px 30px, #ff5a10 30px 36px, transparent 36px 38px, #ffc400 38px); }
  .desk { display: flex; height: 96px; padding-left: 8px; }
  .pages { display: flex; flex-direction: column; gap: 2px; flex: none; width: 31px; padding-top: 8px; }
  .pages button, .mini { width: 15px; height: 13px; border: 1px solid #333; border-radius: 3px; background: linear-gradient(#d5d5d8, #a8abaf); font-size: 10px; }
  .pages .on { background: #74dcf5; border-color: #155; }
  .desk-main { flex: none; width: 1222px; }
  .desk-channels { display: flex; height: 81px; }
  .desk-channel { flex: none; width: 49px; padding: 3px 0 0 2px; }
  .desk-channel.final { width: 46px; }
  .desk-channel b { display: block; height: 16px; padding-left: 1px; white-space: nowrap; }
  .desk-channel div { display: flex; align-items: center; gap: 5px; height: 28px; }
  .desk-channel .knob { width: 23px; height: 23px; }
  .desk-channel span { display: flex; }
  .desk-channel .tri { border-width: 3px; border-top-width: 4px; border-bottom: 0; }
  .knob .speaker { fill: #3d4246; margin-left: -2px; }
  .desk .framed { outline-offset: 1px; }
  .mixer-scroll { display: flex; gap: 3px; width: 1208px; height: 13px; }
  .mixer-scroll button { width: 36px; border: 1px solid #444; border-radius: 2px; background: linear-gradient(#ccc, #9c9c9c); }
  .mixer-scroll .tri.side { border-left-color: #444; }
  .trough { flex: 1; margin-top: 1px; border: 1px solid #ddd; border-top: 1px solid #111; border-left-color: #111; background: #acacac; }
  .trough i { display: block; width: 510px; height: 9px; background: #c2cad6; }
  .master-desk { display: flex; flex-direction: column; align-items: center; flex: none; width: 56px; padding-top: 3px; }
  .master-desk .lcd { justify-content: space-around; width: 54px; height: 19px; font-size: 10px; border-radius: 9px; }
  .master-desk .lcd b { font-weight: normal; }
  .fx { width: 41px; height: 17px; margin-top: 13px; border: 1px solid #555; border-radius: 2px; background: linear-gradient(#d0d0d3, #a0a3a8); }
  .out { display: flex; align-items: center; gap: 3px; margin-top: 15px; }
  .side-buttons { display: flex; flex-direction: column; gap: 4px; padding: 4px 0 0 14px; }
  .mini { width: 17px; height: 17px; font-size: 11px; font-weight: bold; color: #333; }
  .mini.plain { margin-top: 19px; font-weight: normal; }

  /* Transport window */
  .transport { position: absolute; right: 84px; bottom: 113px; display: flex; width: 496px; height: 49px; padding: 3px 3px 0 4px; border: 1px solid #4e5350; border-width: 1px 2px 2px 1px; background: repeating-linear-gradient(#c6c6c6 0 2px, #bdbdbd 2px 4px); }
  .clock { flex: none; width: 190px; }
  .display { display: flex; justify-content: space-between; height: 30px; padding: 0 4px 0 12px; border-radius: 14px; background: #a9c5c0; width: 188px; box-shadow: inset 1px 1px 2px #7d9894; }
  .display div { display: flex; flex-direction: column; width: 106px; }
  small { color: #5d7570; font-size: 9px; line-height: 11px; white-space: nowrap; }
  strong { font: 19px/18px "Liberation Sans", Arial, sans-serif; color: #000; }
  .display label { position: relative; align-self: center; display: flex; }
  .display select { width: 64px; font-size: 9px; color: #3a5056; }
  .display label::after { right: 4px; top: 5px; border-width: 4px; border-top-width: 5px; border-bottom: 0; }
  .positions { display: flex; align-items: center; justify-content: space-between; height: 13px; padding-right: 3px; }
  .positions span { color: #14143c; }
  .positions span + .dot { margin-left: 12px; }
  .dot { width: 11px; height: 11px; border-radius: 50%; background: #3c564f; color: #fff; font-size: 8px; line-height: 11px; text-align: center; }
  .positions button { width: 17px; height: 11px; border: 1px solid #444; border-radius: 3px; background: #c2c2c2; }
  .drive { flex: none; width: 193px; padding-left: 4px; }
  .rounds { display: flex; gap: 5px; height: 28px; }
  .rounds button { width: 26px; height: 27px; border: 1px solid #888; border-radius: 50%; background: radial-gradient(circle at 45% 35%, #fff 30%, #ccc); fill: #555; }
  .rounds .play { background: radial-gradient(#d9ffd0, #5fe65a); border-color: #2c9a30; fill: #0a9a1c; }
  .jog { display: block; appearance: none; width: 182px; height: 13px; margin-top: 2px; background: linear-gradient(transparent 4px, #777 4px 5px, #e8e8e8 5px 8px, #999 8px 9px, transparent 9px); }
  .jog::-webkit-slider-thumb { appearance: none; width: 20px; height: 12px; border: 1px solid #5f6c68; border-radius: 6px; background: linear-gradient(#8fb8b0, #8fb8b0) center / 12px 4px no-repeat, #e6ecea; }
  .modes { display: flex; flex-direction: column; gap: 2px; flex: none; width: 82px; }
  .modes div { display: flex; justify-content: space-between; height: 12px; }
  .modes button { flex: 1; border: 1px solid #333; border-radius: 2px; background: linear-gradient(#eee, #b9b9b9); font-size: 8px; line-height: 10px; font-weight: bold; color: #222; }
  .modes div:not(.six) { gap: 2px; }
  .modes div > button, .modes span { flex: 1 1 0; min-width: 0; }
  .modes span { display: flex; }
  .modes .on { background: linear-gradient(#c6efff, #7ccdf8); border-color: #1f6a94; }
  .modes .gold { background: linear-gradient(#ffeab0, #ffc85a); border-color: #a06c10; }
  .close { flex: none; width: 13px; height: 13px; margin: 0 0 0 auto; border-radius: 50%; background: #435a52; color: #eee; }
</style>
